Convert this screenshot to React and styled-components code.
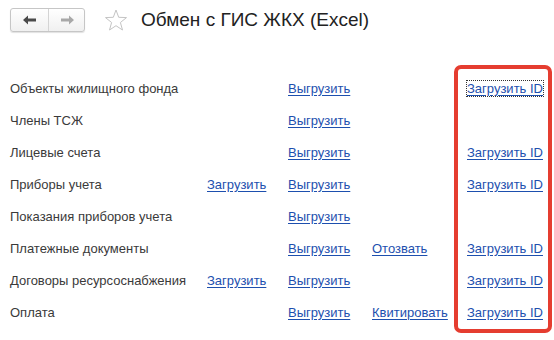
import React from "react";
import styled, { createGlobalStyle } from "styled-components";

const Global = createGlobalStyle`
  html, body { margin: 0; padding: 0; background: #fff; }
  body { font-family: Arial, "Liberation Sans", sans-serif; }
`;

const Page = styled.div`
  width: 554px;
  height: 340px;
  overflow: hidden;
  background: #fff;
`;

const Header = styled.div`
  display: flex;
  align-items: center;
  height: 24px;
  padding: 8px 0 0 10px;
`;

const NavGroup = styled.div`
  display: flex;
  height: 24px;
  border: 1px solid #c6c6c6;
  border-radius: 3px;
  box-sizing: border-box;
  background: linear-gradient(#ffffff, #f0f0f0);
  box-shadow: 0 1px 1px rgba(0, 0, 0, 0.12);
`;

const NavButton = styled.div`
  width: ${(p) => p.$w}px;
  display: flex;
  align-items: center;
  justify-content: center;
  border-left: ${(p) => (p.$divider ? "1px solid #d4d4d4" : "none")};
`;

const StarWrap = styled.div`
  margin-left: 19px;
  width: 24px;
  height: 24px;
  display: flex;
  align-items: center;
  justify-content: center;
`;

const Title = styled.h1`
  margin: 0 0 0 13px;
  font-size: 19px;
  font-weight: normal;
  color: #222;
  line-height: 24px;
  white-space: nowrap;
`;

const Body = styled.div`
  display: flex;
  margin-top: 33px;
  padding-left: 10px;
`;

const Grid = styled.div`
  display: grid;
  grid-template-columns: 197px 81px 84px 82px;
  grid-auto-rows: 32px;
  padding-top: 7px;
`;

const Cell = styled.div`
  display: flex;
  align-items: center;
  font-size: 13px;
  color: #3a3a3a;
  white-space: nowrap;
`;

const Link = styled.a`
  font-size: 13px;
  color: #1d4fae;
  text-decoration: underline;
  text-underline-offset: 2px;
  cursor: pointer;
  white-space: nowrap;
  outline: ${(p) => (p.$focused ? "1px dotted #333" : "none")};
  outline-offset: 0;
`;

const Highlight = styled.div`
  display: grid;
  grid-auto-rows: 32px;
  width: 98px;
  box-sizing: border-box;
  border: 4px solid #e53d30;
  border-radius: 7px;
  padding: 3px 0 1px 9px;
`;

const rows = [
  { name: "Объекты жилищного фонда", load: false, unload: true, extra: null, id: true },
  { name: "Члены ТСЖ", load: false, unload: true, extra: null, id: false },
  { name: "Лицевые счета", load: false, unload: true, extra: null, id: true },
  { name: "Приборы учета", load: true, unload: true, extra: null, id: true },
  { name: "Показания приборов учета", load: false, unload: true, extra: null, id: false },
  { name: "Платежные документы", load: false, unload: true, extra: "Отозвать", id: true },
  { name: "Договоры ресурсоснабжения", load: true, unload: true, extra: null, id: true },
  { name: "Оплата", load: false, unload: true, extra: "Квитировать", id: true },
];

const ArrowLeft = ({ color }) => (
  <svg width="14" height="10" viewBox="0 0 14 10">
    <path d="M0 5 L5 0.5 L5 3.6 L13 3.6 L13 6.4 L5 6.4 L5 9.5 Z" fill={color} />
  </svg>
);

const ArrowRight = ({ color }) => (
  <svg width="14" height="10" viewBox="0 0 14 10">
    <path d="M14 5 L9 0.5 L9 3.6 L1 3.6 L1 6.4 L9 6.4 L9 9.5 Z" fill={color} />
  </svg>
);

const Star = () => (
  <svg width="24" height="23" viewBox="0 0 24 23">
    <path
      d="M12 1 L14.7 8.3 L22.5 8.6 L16.4 13.5 L18.5 21 L12 16.7 L5.5 21 L7.6 13.5 L1.5 8.6 L9.3 8.3 Z"
      fill="none"
      stroke="#c4c4c4"
      strokeWidth="1"
      strokeLinejoin="miter"
    />
  </svg>
);

export default function App() {
  return (
    <Page>
      <Global />
      <Header>
        <NavGroup>
          <NavButton $w={37}>
            <ArrowLeft color="#4a4a4a" />
          </NavButton>
          <NavButton $w={35} $divider>
            <ArrowRight color="#a8a8a8" />
          </NavButton>
        </NavGroup>
        <StarWrap>
          <Star />
        </StarWrap>
        <Title>Обмен с ГИС ЖКХ (Excel)</Title>
      </Header>
      <Body>
        <Grid>
          {rows.map((r) => (
            <React.Fragment key={r.name}>
              <Cell>{r.name}</Cell>
              <Cell>{r.load && <Link>Загрузить</Link>}</Cell>
              <Cell>{r.unload && <Link>Выгрузить</Link>}</Cell>
              <Cell>{r.extra && <Link>{r.extra}</Link>}</Cell>
            </React.Fragment>
          ))}
        </Grid>
        <Highlight>
          {rows.map((r, i) => (
            <Cell key={r.name}>{r.id && <Link $focused={i === 0}>Загрузить ID</Link>}</Cell>
          ))}
        </Highlight>
      </Body>
    </Page>
  );
}
